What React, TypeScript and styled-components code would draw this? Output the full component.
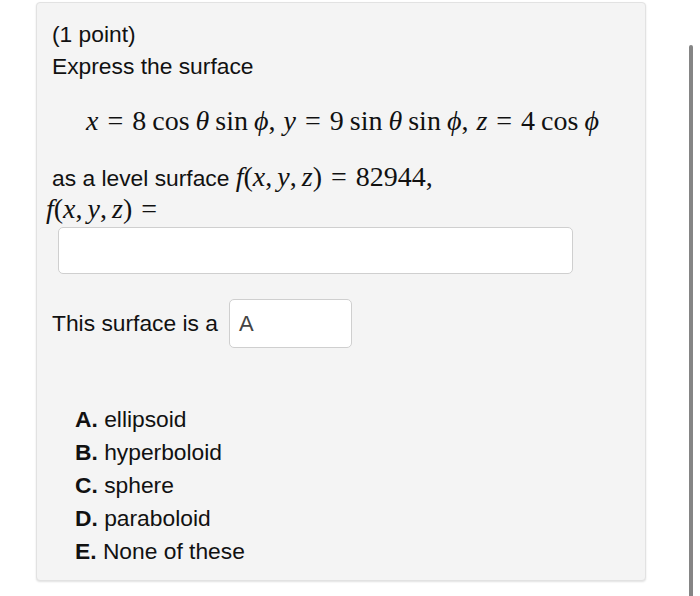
import React from "react";
import styled, { createGlobalStyle } from "styled-components";

const GlobalStyle = createGlobalStyle`
  html, body {
    margin: 0;
    padding: 0;
    background: #ffffff;
  }
  body {
    font-family: "Liberation Sans", Arial, Helvetica, sans-serif;
    color: #111;
  }
`;

const Page = styled.div`
  position: relative;
  width: 700px;
  height: 596px;
  overflow: hidden;
  padding-top: 2px;
  box-sizing: border-box;
`;

const Panel = styled.div`
  margin-left: 36px;
  width: 610px;
  height: 579px;
  box-sizing: border-box;
  background: #f4f4f4;
  border: 1px solid #e2e2e2;
  border-radius: 4px;
  box-shadow: 0 1px 2px rgba(0, 0, 0, 0.12);
  padding: 15px 0 0 15px;
  font-size: 22.8px;
`;

const Line = styled.div<{ top?: number; shift?: number }>`
  line-height: 32px;
  height: 32px;
  margin-top: ${(p) => p.top ?? 0}px;
  margin-left: ${(p) => p.shift ?? 0}px;
  white-space: nowrap;
`;

const MathBlock = styled.div`
  margin-top: 19px;
  margin-left: 34px;
  height: 40px;
  line-height: 40px;
  white-space: nowrap;
`;

const M = styled.span<{ size?: number }>`
  font-family: "Liberation Serif", "Times New Roman", serif;
  font-size: ${(p) => p.size ?? 28}px;
  color: #111;
`;

const I = styled.span`
  font-style: italic;
`;

const Op = styled.span`
  margin: 0 9px;
`;

const Sp = styled.span<{ w?: number }>`
  display: inline-block;
  width: ${(p) => p.w ?? 6}px;
`;

const AnswerInput = styled.div`
  margin: 2px 0 0 6px;
  width: 515px;
  height: 47px;
  box-sizing: border-box;
  background: #fff;
  border: 1.5px solid #cfcfcf;
  border-radius: 5px;
`;

const ChoiceRow = styled.div`
  display: flex;
  align-items: center;
  gap: 11px;
  margin-top: 25px;
`;

const ChoiceBox = styled.div`
  width: 123px;
  height: 49px;
  box-sizing: border-box;
  background: #fff;
  border: 1.5px solid #cfcfcf;
  border-radius: 5px;
  padding-left: 9px;
  display: flex;
  align-items: center;
  color: #444;
  font-size: 22px;
`;

const Options = styled.ol`
  list-style: none;
  margin: 55px 0 0 23px;
  padding: 0;
`;

const Option = styled.li`
  line-height: 33px;
  height: 33px;
`;

const Letter = styled.b`
  font-weight: 700;
`;

const Scrollbar = styled.div`
  position: absolute;
  left: 689px;
  top: 45px;
  width: 4px;
  height: 560px;
  border-radius: 2px;
  background: #858585;
`;

const options: [string, string][] = [
  ["A.", "ellipsoid"],
  ["B.", "hyperboloid"],
  ["C.", "sphere"],
  ["D.", "paraboloid"],
  ["E.", "None of these"],
];

const Fxyz = () => (
  <>
    <I>f</I>(<I>x</I>,<Sp w={5} />
    <I>y</I>,<Sp w={5} />
    <I>z</I>)
  </>
);

export default function App() {
  return (
    <Page>
      <GlobalStyle />
      <Panel>
        <Line>(1 point)</Line>
        <Line>Express the surface</Line>
        <MathBlock>
          <M>
            <I>x</I>
            <Op>=</Op>8<Sp />cos<Sp />
            <I>θ</I>
            <Sp />sin<Sp />
            <I>ϕ</I>,<Sp w={8} />
            <I>y</I>
            <Op>=</Op>9<Sp />sin<Sp />
            <I>θ</I>
            <Sp />sin<Sp />
            <I>ϕ</I>,<Sp w={8} />
            <I>z</I>
            <Op>=</Op>4<Sp />cos<Sp />
            <I>ϕ</I>
          </M>
        </MathBlock>
        <Line top={20}>
          as a level surface{" "}
          <M>
            <Fxyz />
            <Op>=</Op>82944,
          </M>
        </Line>
        <Line shift={-6}>
          <M>
            <Fxyz />
            <Op>=</Op>
          </M>
        </Line>
        <AnswerInput />
        <ChoiceRow>
          <span>This surface is a</span>
          <ChoiceBox>A</ChoiceBox>
        </ChoiceRow>
        <Options>
          {options.map(([l, t]) => (
            <Option key={l}>
              <Letter>{l}</Letter> {t}
            </Option>
          ))}
        </Options>
      </Panel>
      <Scrollbar />
    </Page>
  );
}
